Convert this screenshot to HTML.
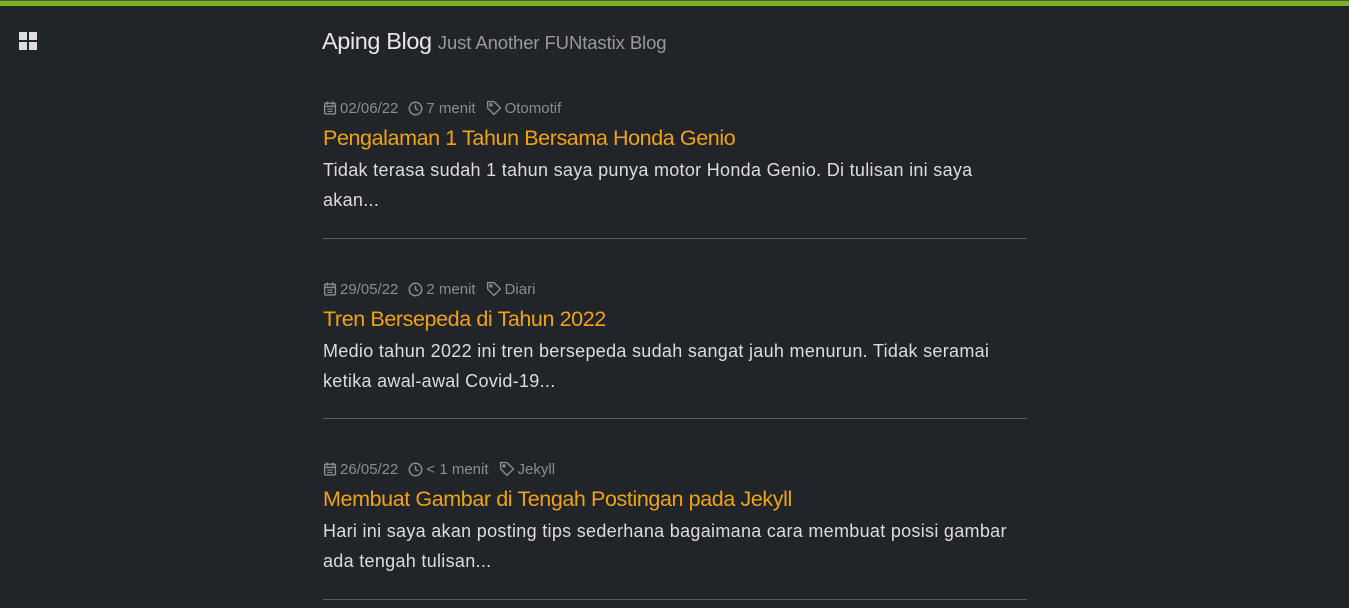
<!DOCTYPE html>
<html><head><meta charset="utf-8"><style>
*{margin:0;padding:0;box-sizing:border-box}
body{width:1349px;height:608px;overflow:hidden;background:#212429;font-family:"Liberation Sans",sans-serif;position:relative}
.bar{position:absolute;top:0;left:0;width:100%;height:6px;background:#78b41e;border-top:1px solid #555}
.grid{position:absolute;left:19px;top:32px;width:18px;height:18px}
.grid i{position:absolute;width:8px;height:8px;background:#ddd}
.brand{position:absolute;left:322px;top:28px;color:#e6e6e6;font-size:23.5px;letter-spacing:-0.4px;white-space:nowrap}
.brand span{color:#999;font-size:18.5px;letter-spacing:-0.1px}
.post{position:absolute;left:323px;width:704px}
.meta{color:#8a8c90;font-size:15px;height:20px;display:flex;align-items:center;white-space:nowrap;margin-top:1px}
.meta svg{margin-right:3px}
.meta .g{margin-right:10px;display:flex;align-items:center}
.t{color:#f0a30a;font-size:21.5px;letter-spacing:-0.4px;margin-top:7px;line-height:26px;white-space:nowrap}
.e{color:#dcdcdc;font-size:18px;line-height:30px;margin-top:4px;white-space:nowrap;letter-spacing:0.3px}
.hr{position:absolute;left:0;width:704px;height:1px;background:#5a5c60;top:141px}
</style></head><body>
<div class="bar"></div>
<div class="grid"><i style="left:0;top:0"></i><i style="left:10px;top:0"></i><i style="left:0;top:10px"></i><i style="left:10px;top:10px"></i></div>
<div class="brand">Aping Blog <span>Just Another FUNtastix Blog</span></div>

<div class="post" style="top:97px">
<div class="meta">
<span class="g"><svg width="14" height="14" viewBox="0 0 13 13" fill="none" stroke="#8a8c90" stroke-width="1.3"><rect x="1.5" y="2" width="10" height="10" rx="1"/><path d="M1.5 5h10M4 0.5v3M9 0.5v3"/><path d="M4 7.5h5M4 9.7h5" stroke-width="1"/></svg>02/06/22</span>
<span class="g"><svg width="15" height="15" viewBox="0 0 14 14" fill="none" stroke="#8a8c90" stroke-width="1.4"><circle cx="7" cy="7" r="5.8"/><path d="M7 3.5V7l2.5 1.5"/></svg>7 menit</span>
<span class="g"><svg width="16" height="16" viewBox="0 0 15 15" fill="none" stroke="#8a8c90" stroke-width="1.3"><path d="M1.5 1.5h6l6 6-6 6-6-6z"/><circle cx="4.6" cy="4.6" r="1"/></svg>Otomotif</span>
</div>
<div class="t">Pengalaman 1 Tahun Bersama Honda Genio</div>
<div class="e">Tidak terasa sudah 1 tahun saya punya motor Honda Genio. Di tulisan ini saya<br>akan...</div>
<div class="hr"></div>
</div>

<div class="post" style="top:278px">
<div class="meta">
<span class="g"><svg width="14" height="14" viewBox="0 0 13 13" fill="none" stroke="#8a8c90" stroke-width="1.3"><rect x="1.5" y="2" width="10" height="10" rx="1"/><path d="M1.5 5h10M4 0.5v3M9 0.5v3"/><path d="M4 7.5h5M4 9.7h5" stroke-width="1"/></svg>29/05/22</span>
<span class="g"><svg width="15" height="15" viewBox="0 0 14 14" fill="none" stroke="#8a8c90" stroke-width="1.4"><circle cx="7" cy="7" r="5.8"/><path d="M7 3.5V7l2.5 1.5"/></svg>2 menit</span>
<span class="g"><svg width="16" height="16" viewBox="0 0 15 15" fill="none" stroke="#8a8c90" stroke-width="1.3"><path d="M1.5 1.5h6l6 6-6 6-6-6z"/><circle cx="4.6" cy="4.6" r="1"/></svg>Diari</span>
</div>
<div class="t">Tren Bersepeda di Tahun 2022</div>
<div class="e">Medio tahun 2022 ini tren bersepeda sudah sangat jauh menurun. Tidak seramai<br>ketika awal-awal Covid-19...</div>
<div class="hr" style="top:140px"></div>
</div>

<div class="post" style="top:458px">
<div class="meta">
<span class="g"><svg width="14" height="14" viewBox="0 0 13 13" fill="none" stroke="#8a8c90" stroke-width="1.3"><rect x="1.5" y="2" width="10" height="10" rx="1"/><path d="M1.5 5h10M4 0.5v3M9 0.5v3"/><path d="M4 7.5h5M4 9.7h5" stroke-width="1"/></svg>26/05/22</span>
<span class="g"><svg width="15" height="15" viewBox="0 0 14 14" fill="none" stroke="#8a8c90" stroke-width="1.4"><circle cx="7" cy="7" r="5.8"/><path d="M7 3.5V7l2.5 1.5"/></svg>&lt; 1 menit</span>
<span class="g"><svg width="16" height="16" viewBox="0 0 15 15" fill="none" stroke="#8a8c90" stroke-width="1.3"><path d="M1.5 1.5h6l6 6-6 6-6-6z"/><circle cx="4.6" cy="4.6" r="1"/></svg>Jekyll</span>
</div>
<div class="t">Membuat Gambar di Tengah Postingan pada Jekyll</div>
<div class="e">Hari ini saya akan posting tips sederhana bagaimana cara membuat posisi gambar<br>ada tengah tulisan...</div>
<div class="hr"></div>
</div>
</body></html>
